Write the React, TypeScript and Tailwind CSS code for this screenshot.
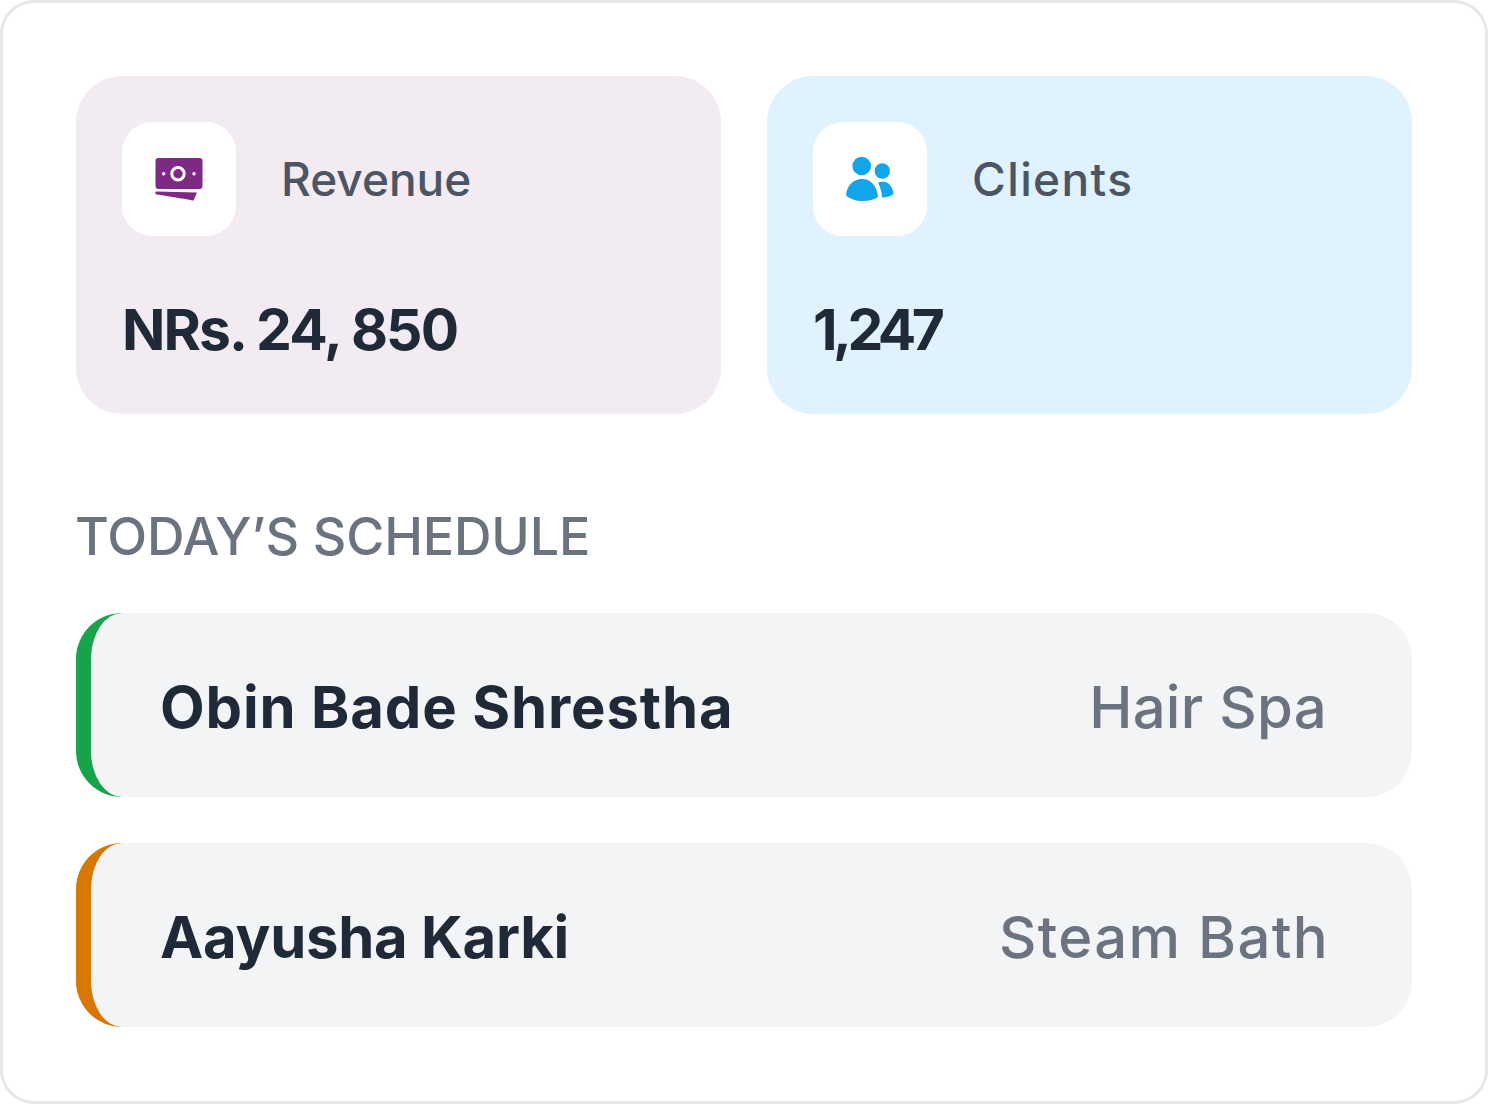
import React from 'react';

const font = { fontFamily: 'Inter, sans-serif' };

const MoneyIcon: React.FC = () => (
  <svg width="48" height="44" viewBox="0 0 48 44" fill="none">
    <rect x="0.5" y="1" width="47" height="31" rx="3" fill="#7e2a85" />
    <circle cx="23" cy="16.700" r="6.200" fill="none" stroke="#ffffff" strokeWidth="3" />
    <circle cx="8.700" cy="16.700" r="1.700" fill="#ffffff" />
    <circle cx="39" cy="16.700" r="1.700" fill="#ffffff" />
    <path d="M1 34.500 L42 35.500 L38.500 43.500 L37.500 43.500 C26 41 12 39 1.500 37.500 C0 37 0 35 1 34.500 Z" fill="#7e2a85" />
  </svg>
);

const UsersIcon: React.FC = () => (
  <svg width="48" height="46" viewBox="0 0 48 46" fill="#12a5ec">
    <circle cx="15.700" cy="10" r="9.300" />
    <circle cx="36.300" cy="15" r="7.700" />
    <path d="M0 39.500 C0.500 30 7 23 16 23 C25 23 31 30 32 41 C27 44.500 21 45 16 45 C10 45 4 43 0 39.500 Z" />
    <path d="M32 26.500 C35 25.500 37 25.500 39 26 C44 27 47 32 47.500 38 C45 40.500 40 41.500 36 41.500 C35.500 36 34.500 31 32 26.500 Z" />
  </svg>
);

const StatCard: React.FC<{ bg: string; icon: React.ReactNode; label: React.ReactNode; value: React.ReactNode }> = ({ bg, icon, label, value }) => (
  <div className={`${bg} rounded-[46px] p-[46px] h-[338px] flex flex-col`}>
    <div className="flex items-center gap-[45px]">
      <div className="w-[114px] h-[114px] rounded-[30px] bg-white flex items-center justify-center">{icon}</div>
      {label}
    </div>
    <div className="mt-[57px]">{value}</div>
  </div>
);

const ScheduleRow: React.FC<{ accent: string; name: React.ReactNode; service: React.ReactNode }> = ({ accent, name, service }) => (
  <div className={`${accent} h-[184px] rounded-[46px] border-l-[15px] bg-[#f3f4f6] pl-[69px] pr-[85px] pt-[4px] flex items-center justify-between`}>
    {name}
    {service}
  </div>
);

export default function App() {
  return (
    <div style={font} className="w-[1488px] h-[1104px] bg-white border-[3px] border-[#e5e7eb] rounded-[34px] p-[73px]">
      <div className="grid grid-cols-2 gap-[46px]">
        <StatCard
          bg="bg-[#f2ebf2]"
          icon={<MoneyIcon />}
          label={<span className="text-[46px] leading-[69px] font-[450] text-[#4b5563]">Revenue</span>}
          value={<div className="text-[57px] leading-[74px] font-bold text-[#1f2937] tracking-[-1.9px]">NRs. 24, 850</div>}
        />
        <StatCard
          bg="bg-[#e0f2fe]"
          icon={<UsersIcon />}
          label={<span className="text-[46px] leading-[69px] font-[450] text-[#4b5563] tracking-[1.4px]">Clients</span>}
          value={<div className="text-[57px] leading-[74px] font-bold text-[#1f2937] tracking-[-4.6px]">1,247</div>}
        />
      </div>
      <h2 className="mt-[88px] -ml-px text-[52px] leading-[70px] font-[450] text-[#6b7280] tracking-[-0.15px]">TODAY’S SCHEDULE</h2>
      <div className="mt-[41px] flex flex-col gap-[46px]">
        <ScheduleRow
          accent="border-[#16a34a]"
          name={<span className="text-[58px] font-bold text-[#1f2937] tracking-[0.85px]">Obin Bade Shrestha</span>}
          service={<span className="text-[58px] font-[450] text-[#6b7280] tracking-[0.3px]">Hair Spa</span>}
        />
        <ScheduleRow
          accent="border-[#d97706]"
          name={<span className="text-[58px] font-bold text-[#1f2937] tracking-[-0.25px]">Aayusha Karki</span>}
          service={<span className="text-[58px] font-[450] -mr-[2px] text-[#6b7280] tracking-[1.3px]">Steam Bath</span>}
        />
      </div>
    </div>
  );
}
